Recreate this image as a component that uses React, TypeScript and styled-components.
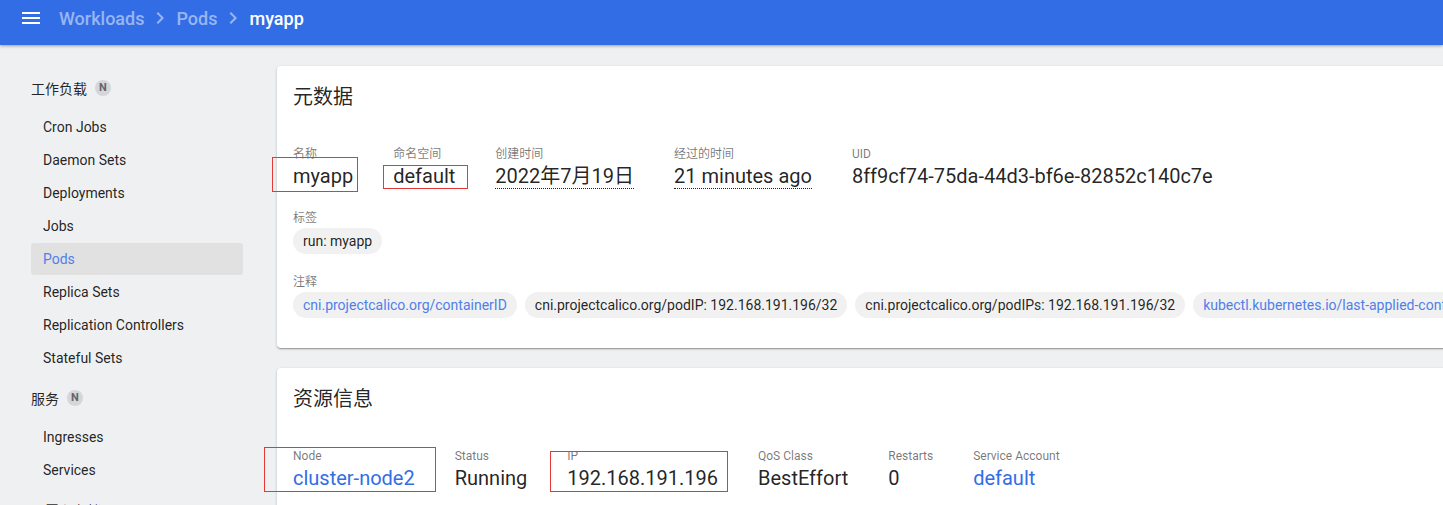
import React from "react";
import styled, { createGlobalStyle } from "styled-components";

const GlobalStyle = createGlobalStyle`
  html, body {
    margin: 0;
    padding: 0;
    background: #eff0f2;
    font-family: Roboto, "Noto Sans CJK SC", sans-serif;
    color: rgba(0, 0, 0, 0.87);
  }
  body {
    overflow: hidden;
  }
`;

const Page = styled.div`
  position: relative;
  width: 1443px;
  height: 505px;
  overflow: hidden;
  display: flex;
  flex-direction: column;
`;

const TopBar = styled.header`
  height: 45px;
  padding: 0 0 9px 19px;
  box-sizing: border-box;
  background: #326de6;
  display: flex;
  align-items: center;
  flex-shrink: 0;
  position: relative;
  z-index: 2;
  box-shadow: 0 1px 3px rgba(0, 0, 0, 0.35);
`;

const MenuIcon = styled.svg`
  width: 24px;
  height: 24px;
  fill: #fff;
  margin-right: 16px;
`;

const Crumb = styled.span<{ $current?: boolean }>`
  font-size: 18px;
  font-weight: 500;
  color: ${(p) => (p.$current ? "#ffffff" : "rgba(255, 255, 255, 0.5)")};
`;

const Chevron = styled.svg`
  width: 24px;
  height: 24px;
  fill: rgba(255, 255, 255, 0.5);
  margin: 0 4px;
`;

const Body = styled.div`
  flex: 1;
  display: flex;
  min-height: 0;
`;

const Sidebar = styled.nav`
  width: 256px;
  flex-shrink: 0;
  padding: 20px 13px 0 31px;
  box-sizing: border-box;
`;

const GroupTitle = styled.div`
  height: 45px;
  margin-bottom: 1px;
  display: flex;
  align-items: center;
  font-size: 14px;
  color: rgba(0, 0, 0, 0.87);
`;

const Badge = styled.span`
  width: 16px;
  height: 16px;
  border-radius: 50%;
  background: #d5d6d8;
  color: #626468;
  font-size: 11px;
  font-weight: 700;
  display: inline-flex;
  align-items: center;
  justify-content: center;
  margin-left: 8px;
`;

const NavItem = styled.div<{ $active?: boolean }>`
  height: 32px;
  margin-bottom: 1px;
  padding-left: 12px;
  display: flex;
  align-items: center;
  font-size: 14px;
  border-radius: 3px;
  color: ${(p) => (p.$active ? "#4f7fea" : "rgba(0, 0, 0, 0.87)")};
  background: ${(p) => (p.$active ? "#e1e1e2" : "transparent")};
`;

const Main = styled.main`
  flex: 1;
  min-width: 0;
  padding: 21px 0 0 21px;
  overflow: hidden;
`;

const Card = styled.section`
  background: #fff;
  border-radius: 4px;
  margin-right: -30px;
  margin-bottom: 20px;
  padding: 15px 16px 30px 16px;
  box-shadow: 0 1px 3px rgba(0, 0, 0, 0.2), 0 1px 1px rgba(0, 0, 0, 0.14),
    0 2px 1px -1px rgba(0, 0, 0, 0.12);
`;

const CardTitle = styled.h2`
  margin: 0 0 33px 0;
  font-size: 20px;
  font-weight: 400;
  line-height: 32px;
`;

const PropRow = styled.div`
  display: flex;
  gap: 40px;
`;

const Prop = styled.div`
  display: flex;
  flex-direction: column;
  flex-shrink: 0;
`;

const Label = styled.div`
  font-size: 12px;
  line-height: 16px;
  color: rgba(0, 0, 0, 0.54);
`;

const Value = styled.div<{ $link?: boolean }>`
  font-size: 20px;
  line-height: 28px;
  white-space: nowrap;
  color: ${(p) => (p.$link ? "#326de6" : "rgba(0, 0, 0, 0.87)")};
`;

const Dotted = styled.span`
  border-bottom: 1px dotted rgba(0, 0, 0, 0.87);
`;

const Section = styled.div`
  margin-top: 20px;
`;

const ChipRow = styled.div`
  display: flex;
  gap: 8px;
  margin-top: 2px;
`;

const Chip = styled.span<{ $link?: boolean }>`
  flex-shrink: 0;
  height: 26px;
  padding: 0 10px;
  border-radius: 13px;
  background: #f1f1f1;
  font-size: 14px;
  display: inline-flex;
  align-items: center;
  white-space: nowrap;
  color: ${(p) => (p.$link ? "#4f7fea" : "rgba(0, 0, 0, 0.87)")};
`;

const Mark = styled.div`
  position: absolute;
  border: 1px solid #e53935;
  box-sizing: border-box;
  pointer-events: none;
  z-index: 3;
`;

const chevronPath = "M10 6L8.59 7.41 13.17 12l-4.58 4.59L10 18l6-6z";

const groups = [
  {
    title: "工作负载",
    items: [
      "Cron Jobs",
      "Daemon Sets",
      "Deployments",
      "Jobs",
      "Pods",
      "Replica Sets",
      "Replication Controllers",
      "Stateful Sets",
    ],
  },
  { title: "服务", items: ["Ingresses", "Services"] },
  { title: "配置和存储", items: [] as string[] },
];

const annotations = [
  { text: "cni.projectcalico.org/containerID", link: true },
  { text: "cni.projectcalico.org/podIP: 192.168.191.196/32" },
  { text: "cni.projectcalico.org/podIPs: 192.168.191.196/32" },
  { text: "kubectl.kubernetes.io/last-applied-configuration", link: true },
];

// red annotation boxes drawn over the screenshot
const marks = [
  { left: 272, top: 157, width: 86, height: 35 },
  { left: 383, top: 165, width: 85, height: 24 },
  { left: 264, top: 447, width: 172, height: 45 },
  { left: 550, top: 451, width: 178, height: 41 },
];

export default function App() {
  return (
    <Page>
      <GlobalStyle />
      <TopBar>
        <MenuIcon viewBox="0 0 24 24">
          <path d="M3 18h18v-2H3v2zm0-5h18v-2H3v2zm0-7v2h18V6H3z" />
        </MenuIcon>
        <Crumb>Workloads</Crumb>
        <Chevron viewBox="0 0 24 24">
          <path d={chevronPath} />
        </Chevron>
        <Crumb>Pods</Crumb>
        <Chevron viewBox="0 0 24 24">
          <path d={chevronPath} />
        </Chevron>
        <Crumb $current>myapp</Crumb>
      </TopBar>

      <Body>
        <Sidebar>
          {groups.map((g) => (
            <div key={g.title}>
              <GroupTitle>
                {g.title}
                {g.items.length > 0 && <Badge>N</Badge>}
              </GroupTitle>
              {g.items.map((item) => (
                <NavItem key={item} $active={item === "Pods"}>
                  {item}
                </NavItem>
              ))}
            </div>
          ))}
        </Sidebar>

        <Main>
          <Card>
            <CardTitle>元数据</CardTitle>
            <PropRow>
              <Prop>
                <Label>名称</Label>
                <Value>myapp</Value>
              </Prop>
              <Prop>
                <Label>命名空间</Label>
                <Value>default</Value>
              </Prop>
              <Prop>
                <Label>创建时间</Label>
                <Value>
                  <Dotted>2022年7月19日</Dotted>
                </Value>
              </Prop>
              <Prop>
                <Label>经过的时间</Label>
                <Value>
                  <Dotted>21 minutes ago</Dotted>
                </Value>
              </Prop>
              <Prop>
                <Label>UID</Label>
                <Value>8ff9cf74-75da-44d3-bf6e-82852c140c7e</Value>
              </Prop>
            </PropRow>
            <Section>
              <Label>标签</Label>
              <ChipRow>
                <Chip>run: myapp</Chip>
              </ChipRow>
            </Section>
            <Section>
              <Label>注释</Label>
              <ChipRow>
                {annotations.map((a) => (
                  <Chip key={a.text} $link={a.link}>
                    {a.text}
                  </Chip>
                ))}
              </ChipRow>
            </Section>
          </Card>

          <Card>
            <CardTitle>资源信息</CardTitle>
            <PropRow>
              <Prop>
                <Label>Node</Label>
                <Value $link>cluster-node2</Value>
              </Prop>
              <Prop>
                <Label>Status</Label>
                <Value>Running</Value>
              </Prop>
              <Prop>
                <Label>IP</Label>
                <Value>192.168.191.196</Value>
              </Prop>
              <Prop>
                <Label>QoS Class</Label>
                <Value>BestEffort</Value>
              </Prop>
              <Prop>
                <Label>Restarts</Label>
                <Value>0</Value>
              </Prop>
              <Prop>
                <Label>Service Account</Label>
                <Value $link>default</Value>
              </Prop>
            </PropRow>
          </Card>
        </Main>
      </Body>

      {marks.map((m, i) => (
        <Mark key={i} style={{ left: m.left, top: m.top, width: m.width, height: m.height }} />
      ))}
    </Page>
  );
}
